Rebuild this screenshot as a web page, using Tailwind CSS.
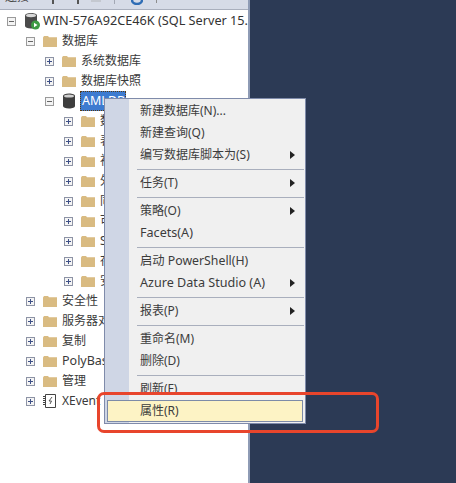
<!DOCTYPE html>
<html lang="en">
<head>
    <meta charset="UTF-8">
    <title>Object Explorer</title>
    <script src="https://cdn.jsdelivr.net/npm/@tailwindcss/browser@4"></script>
</head>
<body class="relative w-[456px] h-[483px] overflow-hidden flex bg-[#2c3a55] text-[12px] text-[#3a3a3a] font-['Noto_Sans','Noto_Sans_CJK_SC',sans-serif]">
    <!-- Object explorer panel -->
    <div class="w-[250px] h-full flex flex-col bg-white border-r-2 border-[#8e9bb5]">
        <!-- toolbar, cut off by the crop -->
        <div class="h-[10px] shrink-0 bg-[#d6dbe7] border-b border-[#a9afbd] overflow-hidden flex items-start pl-[5px]">
            <span class="text-[12px] leading-[14px] mt-[-10px] w-[41px] shrink-0 text-[#444]">连接</span>
            <span class="w-[8px] h-[4px] border-r-2 border-[#555] shrink-0"></span>
            <span class="w-[25px] h-[4px] border-r-2 border-[#555] shrink-0"></span>
            <span class="w-[10px] h-[2px] bg-[#c4c8d0] ml-[12px] shrink-0"></span>
            <span class="w-px h-[4px] bg-[#a3a8b4] ml-[13px] shrink-0"></span>
            <svg class="ml-[16px] shrink-0" width="12" height="5" viewBox="0 0 12 5"><path d="M1 0a5 4 0 0 0 10 0" fill="none" stroke="#2f6db5" stroke-width="2.500"/></svg>
            <span class="w-px h-[3px] bg-[#8d8d8d] ml-[13px] shrink-0"></span>
        </div>

        <!-- tree -->
        <div class="pt-px pl-[7px] overflow-hidden">
            <div class="h-5 flex items-center whitespace-nowrap">
                <svg class="shrink-0" width="9" height="9" viewBox="0 0 9 9"><rect x=".5" y=".5" width="8" height="8" fill="#f4f4f4" stroke="#9a9a9a"/><path d="M2 4.500h5" stroke="#666"/></svg>
                <svg class="ml-[8px] shrink-0" width="16" height="18" viewBox="0 0 16 18">
                    <path d="M1 3.500C1 2 3.500 1 7 1s6 1 6 2.500V14c0 1.500-2.500 2.500-6 2.500S1 15.500 1 14z" fill="#4a4a4a"/>
                    <ellipse cx="7" cy="3.500" rx="5" ry="1.700" fill="#d9d9d9"/>
                    <circle cx="11.500" cy="13" r="4.500" fill="#3f9b45"/>
                    <path d="M10 10.800v4.400l3.500-2.200z" fill="#fff"/>
                </svg>
                <span class="ml-[3px] text-[12.7px] text-[#333]">WIN-576A92CE46K (SQL Server 15.</span>
            </div>
            <div class="pl-[19px]">
                <div class="h-5 flex items-center whitespace-nowrap">
                    <svg class="shrink-0" width="9" height="9" viewBox="0 0 9 9"><rect x=".5" y=".5" width="8" height="8" fill="#f4f4f4" stroke="#9a9a9a"/><path d="M2 4.500h5" stroke="#666"/></svg>
                    <svg class="ml-[8px] shrink-0" width="14" height="12" viewBox="0 0 14 12"><path d="M0 2.500 1 1h4l1 1.200h8V12H0z" fill="#d9bb82"/></svg>
                    <span class="ml-[5px]">数据库</span>
                </div>
                <div class="pl-[19px]">
                    <div class="h-5 flex items-center whitespace-nowrap">
                        <svg class="shrink-0" width="9" height="9" viewBox="0 0 9 9"><rect x=".5" y=".5" width="8" height="8" fill="#f4f4f4" stroke="#8d93a5"/><path d="M2 4.500h5M4.500 2v5" stroke="#3d4f86"/></svg>
                        <svg class="ml-[8px] shrink-0" width="14" height="12" viewBox="0 0 14 12"><path d="M0 2.500 1 1h4l1 1.200h8V12H0z" fill="#d9bb82"/></svg>
                        <span class="ml-[5px]">系统数据库</span>
                    </div>
                    <div class="h-5 flex items-center whitespace-nowrap">
                        <svg class="shrink-0" width="9" height="9" viewBox="0 0 9 9"><rect x=".5" y=".5" width="8" height="8" fill="#f4f4f4" stroke="#8d93a5"/><path d="M2 4.500h5M4.500 2v5" stroke="#3d4f86"/></svg>
                        <svg class="ml-[8px] shrink-0" width="14" height="12" viewBox="0 0 14 12"><path d="M0 2.500 1 1h4l1 1.200h8V12H0z" fill="#d9bb82"/></svg>
                        <span class="ml-[5px]">数据库快照</span>
                    </div>
                    <div class="h-5 flex items-center whitespace-nowrap">
                        <svg class="shrink-0" width="9" height="9" viewBox="0 0 9 9"><rect x=".5" y=".5" width="8" height="8" fill="#f4f4f4" stroke="#9a9a9a"/><path d="M2 4.500h5" stroke="#666"/></svg>
                        <svg class="ml-[8px] shrink-0" width="14" height="16" viewBox="0 0 14 16">
                            <path d="M1 3c0-1.500 2.500-2.500 6-2.500S13 1.500 13 3v10c0 1.500-2.500 2.500-6 2.500S1 14.500 1 13z" fill="#3e3e3e"/>
                            <ellipse cx="7" cy="3" rx="5" ry="1.600" fill="#cfcfcf"/>
                        </svg>
                        <span class="ml-[4px] h-5 w-[46px] leading-[18px] pl-[1px] bg-[#3d7bd0] text-white text-[12.5px] border border-dotted border-[#5a3a10]">AMLDB</span>
                    </div>
                    <div class="pl-[19px]">
                        <div class="h-5 flex items-center whitespace-nowrap">
                            <svg class="shrink-0" width="9" height="9" viewBox="0 0 9 9"><rect x=".5" y=".5" width="8" height="8" fill="#f4f4f4" stroke="#8d93a5"/><path d="M2 4.500h5M4.500 2v5" stroke="#3d4f86"/></svg>
                            <svg class="ml-[8px] shrink-0" width="14" height="12" viewBox="0 0 14 12"><path d="M0 2.500 1 1h4l1 1.200h8V12H0z" fill="#d9bb82"/></svg>
                            <span class="ml-[5px]">数</span>
                        </div>
                        <div class="h-5 flex items-center whitespace-nowrap">
                            <svg class="shrink-0" width="9" height="9" viewBox="0 0 9 9"><rect x=".5" y=".5" width="8" height="8" fill="#f4f4f4" stroke="#8d93a5"/><path d="M2 4.500h5M4.500 2v5" stroke="#3d4f86"/></svg>
                            <svg class="ml-[8px] shrink-0" width="14" height="12" viewBox="0 0 14 12"><path d="M0 2.500 1 1h4l1 1.200h8V12H0z" fill="#d9bb82"/></svg>
                            <span class="ml-[5px]">表</span>
                        </div>
                        <div class="h-5 flex items-center whitespace-nowrap">
                            <svg class="shrink-0" width="9" height="9" viewBox="0 0 9 9"><rect x=".5" y=".5" width="8" height="8" fill="#f4f4f4" stroke="#8d93a5"/><path d="M2 4.500h5M4.500 2v5" stroke="#3d4f86"/></svg>
                            <svg class="ml-[8px] shrink-0" width="14" height="12" viewBox="0 0 14 12"><path d="M0 2.500 1 1h4l1 1.200h8V12H0z" fill="#d9bb82"/></svg>
                            <span class="ml-[5px]">视</span>
                        </div>
                        <div class="h-5 flex items-center whitespace-nowrap">
                            <svg class="shrink-0" width="9" height="9" viewBox="0 0 9 9"><rect x=".5" y=".5" width="8" height="8" fill="#f4f4f4" stroke="#8d93a5"/><path d="M2 4.500h5M4.500 2v5" stroke="#3d4f86"/></svg>
                            <svg class="ml-[8px] shrink-0" width="14" height="12" viewBox="0 0 14 12"><path d="M0 2.500 1 1h4l1 1.200h8V12H0z" fill="#d9bb82"/></svg>
                            <span class="ml-[5px]">外</span>
                        </div>
                        <div class="h-5 flex items-center whitespace-nowrap">
                            <svg class="shrink-0" width="9" height="9" viewBox="0 0 9 9"><rect x=".5" y=".5" width="8" height="8" fill="#f4f4f4" stroke="#8d93a5"/><path d="M2 4.500h5M4.500 2v5" stroke="#3d4f86"/></svg>
                            <svg class="ml-[8px] shrink-0" width="14" height="12" viewBox="0 0 14 12"><path d="M0 2.500 1 1h4l1 1.200h8V12H0z" fill="#d9bb82"/></svg>
                            <span class="ml-[5px]">同</span>
                        </div>
                        <div class="h-5 flex items-center whitespace-nowrap">
                            <svg class="shrink-0" width="9" height="9" viewBox="0 0 9 9"><rect x=".5" y=".5" width="8" height="8" fill="#f4f4f4" stroke="#8d93a5"/><path d="M2 4.500h5M4.500 2v5" stroke="#3d4f86"/></svg>
                            <svg class="ml-[8px] shrink-0" width="14" height="12" viewBox="0 0 14 12"><path d="M0 2.500 1 1h4l1 1.200h8V12H0z" fill="#d9bb82"/></svg>
                            <span class="ml-[5px]">可</span>
                        </div>
                        <div class="h-5 flex items-center whitespace-nowrap">
                            <svg class="shrink-0" width="9" height="9" viewBox="0 0 9 9"><rect x=".5" y=".5" width="8" height="8" fill="#f4f4f4" stroke="#8d93a5"/><path d="M2 4.500h5M4.500 2v5" stroke="#3d4f86"/></svg>
                            <svg class="ml-[8px] shrink-0" width="14" height="12" viewBox="0 0 14 12"><path d="M0 2.500 1 1h4l1 1.200h8V12H0z" fill="#d9bb82"/></svg>
                            <span class="ml-[5px]">S</span>
                        </div>
                        <div class="h-5 flex items-center whitespace-nowrap">
                            <svg class="shrink-0" width="9" height="9" viewBox="0 0 9 9"><rect x=".5" y=".5" width="8" height="8" fill="#f4f4f4" stroke="#8d93a5"/><path d="M2 4.500h5M4.500 2v5" stroke="#3d4f86"/></svg>
                            <svg class="ml-[8px] shrink-0" width="14" height="12" viewBox="0 0 14 12"><path d="M0 2.500 1 1h4l1 1.200h8V12H0z" fill="#d9bb82"/></svg>
                            <span class="ml-[5px]">存</span>
                        </div>
                        <div class="h-5 flex items-center whitespace-nowrap">
                            <svg class="shrink-0" width="9" height="9" viewBox="0 0 9 9"><rect x=".5" y=".5" width="8" height="8" fill="#f4f4f4" stroke="#8d93a5"/><path d="M2 4.500h5M4.500 2v5" stroke="#3d4f86"/></svg>
                            <svg class="ml-[8px] shrink-0" width="14" height="12" viewBox="0 0 14 12"><path d="M0 2.500 1 1h4l1 1.200h8V12H0z" fill="#d9bb82"/></svg>
                            <span class="ml-[5px]">安</span>
                        </div>
                    </div>
                </div>
            </div>
            <div class="pl-[19px]">
                <div class="h-5 flex items-center whitespace-nowrap">
                    <svg class="shrink-0" width="9" height="9" viewBox="0 0 9 9"><rect x=".5" y=".5" width="8" height="8" fill="#f4f4f4" stroke="#8d93a5"/><path d="M2 4.500h5M4.500 2v5" stroke="#3d4f86"/></svg>
                    <svg class="ml-[8px] shrink-0" width="14" height="12" viewBox="0 0 14 12"><path d="M0 2.500 1 1h4l1 1.200h8V12H0z" fill="#d9bb82"/></svg>
                    <span class="ml-[5px]">安全性</span>
                </div>
                <div class="h-5 flex items-center whitespace-nowrap">
                    <svg class="shrink-0" width="9" height="9" viewBox="0 0 9 9"><rect x=".5" y=".5" width="8" height="8" fill="#f4f4f4" stroke="#8d93a5"/><path d="M2 4.500h5M4.500 2v5" stroke="#3d4f86"/></svg>
                    <svg class="ml-[8px] shrink-0" width="14" height="12" viewBox="0 0 14 12"><path d="M0 2.500 1 1h4l1 1.200h8V12H0z" fill="#d9bb82"/></svg>
                    <span class="ml-[5px]">服务器对象</span>
                </div>
                <div class="h-5 flex items-center whitespace-nowrap">
                    <svg class="shrink-0" width="9" height="9" viewBox="0 0 9 9"><rect x=".5" y=".5" width="8" height="8" fill="#f4f4f4" stroke="#8d93a5"/><path d="M2 4.500h5M4.500 2v5" stroke="#3d4f86"/></svg>
                    <svg class="ml-[8px] shrink-0" width="14" height="12" viewBox="0 0 14 12"><path d="M0 2.500 1 1h4l1 1.200h8V12H0z" fill="#d9bb82"/></svg>
                    <span class="ml-[5px]">复制</span>
                </div>
                <div class="h-5 flex items-center whitespace-nowrap">
                    <svg class="shrink-0" width="9" height="9" viewBox="0 0 9 9"><rect x=".5" y=".5" width="8" height="8" fill="#f4f4f4" stroke="#8d93a5"/><path d="M2 4.500h5M4.500 2v5" stroke="#3d4f86"/></svg>
                    <svg class="ml-[8px] shrink-0" width="14" height="12" viewBox="0 0 14 12"><path d="M0 2.500 1 1h4l1 1.200h8V12H0z" fill="#d9bb82"/></svg>
                    <span class="ml-[5px] text-[12.5px]">PolyBase</span>
                </div>
                <div class="h-5 flex items-center whitespace-nowrap">
                    <svg class="shrink-0" width="9" height="9" viewBox="0 0 9 9"><rect x=".5" y=".5" width="8" height="8" fill="#f4f4f4" stroke="#8d93a5"/><path d="M2 4.500h5M4.500 2v5" stroke="#3d4f86"/></svg>
                    <svg class="ml-[8px] shrink-0" width="14" height="12" viewBox="0 0 14 12"><path d="M0 2.500 1 1h4l1 1.200h8V12H0z" fill="#d9bb82"/></svg>
                    <span class="ml-[5px]">管理</span>
                </div>
                <div class="h-5 flex items-center whitespace-nowrap">
                    <svg class="shrink-0" width="9" height="9" viewBox="0 0 9 9"><rect x=".5" y=".5" width="8" height="8" fill="#f4f4f4" stroke="#8d93a5"/><path d="M2 4.500h5M4.500 2v5" stroke="#3d4f86"/></svg>
                    <svg class="ml-[8px] shrink-0" width="13" height="14" viewBox="0 0 13 14"><path d="M2.500.5h10v13h-10z" fill="#fff" stroke="#444"/><path d="M1 2v10" stroke="#444" stroke-width="2" stroke-dasharray="1 1"/><path d="M9 3 6 7h2.500L7 10" fill="none" stroke="#555"/></svg>
                    <span class="ml-[6px] text-[12px]">XEvent</span>
                </div>
            </div>
        </div>
    </div>

    <!-- context menu -->
    <div class="absolute left-[104px] top-[98px] w-[202px] h-[326px] py-[1px] border border-[#7f8baa] bg-[#f0f0f0] text-[#3c3c3c]">
        <div class="absolute left-0 top-0 bottom-0 w-[24px] bg-[#cfd6e5]"></div>
        <div class="relative">
            <div class="h-[22px] flex items-center pl-[35px] pr-[10px]"><span>新建数据库(N)...</span></div>
            <div class="h-[22px] flex items-center pl-[35px] pr-[10px]"><span>新建查询(Q)</span></div>
            <div class="h-[22px] flex items-center justify-between pl-[35px] pr-[10px]"><span>编写数据库脚本为(S)</span><span class="border-y-[4px] border-y-transparent border-l-[5px] border-l-[#222]"></span></div>
            <div class="h-[6px] flex items-center pl-[32px] pr-px"><div class="h-px w-full bg-[#a9afbd]"></div></div>
            <div class="h-[22px] flex items-center justify-between pl-[35px] pr-[10px]"><span>任务(T)</span><span class="border-y-[4px] border-y-transparent border-l-[5px] border-l-[#222]"></span></div>
            <div class="h-[6px] flex items-center pl-[32px] pr-px"><div class="h-px w-full bg-[#a9afbd]"></div></div>
            <div class="h-[22px] flex items-center justify-between pl-[35px] pr-[10px]"><span>策略(O)</span><span class="border-y-[4px] border-y-transparent border-l-[5px] border-l-[#222]"></span></div>
            <div class="h-[22px] flex items-center pl-[35px] pr-[10px]"><span class="text-[12.6px]">Facets(A)</span></div>
            <div class="h-[6px] flex items-center pl-[32px] pr-px"><div class="h-px w-full bg-[#a9afbd]"></div></div>
            <div class="h-[22px] flex items-center pl-[35px] pr-[10px]"><span class="text-[12.3px]">启动 PowerShell(H)</span></div>
            <div class="h-[22px] flex items-center justify-between pl-[35px] pr-[10px]"><span class="text-[12.6px]">Azure Data Studio (A)</span><span class="border-y-[4px] border-y-transparent border-l-[5px] border-l-[#222]"></span></div>
            <div class="h-[6px] flex items-center pl-[32px] pr-px"><div class="h-px w-full bg-[#a9afbd]"></div></div>
            <div class="h-[22px] flex items-center justify-between pl-[35px] pr-[10px]"><span>报表(P)</span><span class="border-y-[4px] border-y-transparent border-l-[5px] border-l-[#222]"></span></div>
            <div class="h-[6px] flex items-center pl-[32px] pr-px"><div class="h-px w-full bg-[#a9afbd]"></div></div>
            <div class="h-[22px] flex items-center pl-[35px] pr-[10px]"><span>重命名(M)</span></div>
            <div class="h-[22px] flex items-center pl-[35px] pr-[10px]"><span>删除(D)</span></div>
            <div class="h-[6px] flex items-center pl-[32px] pr-px"><div class="h-px w-full bg-[#a9afbd]"></div></div>
            <div class="h-[22px] flex items-center pl-[35px] pr-[10px]"><span>刷新(F)</span></div>
            <div class="h-[22px] mx-[2px] flex items-center pl-[32px] bg-[#fdf3c5] border border-[#7d8ba8]"><span>属性(R)</span></div>
        </div>
    </div>

    <!-- red annotation frame -->
    <div class="absolute left-[97px] top-[392px] w-[282px] h-[41px] rounded-[7px] border-[3px] border-[#e8452c]"></div>
</body>
</html>
